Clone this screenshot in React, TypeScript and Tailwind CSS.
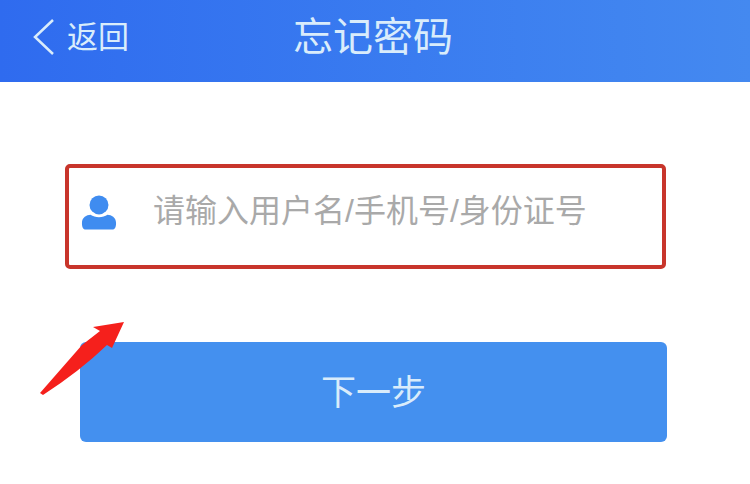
const cjk = "font-['Liberation_Sans','Noto_Sans_CJK_SC',sans-serif]";

function UserIcon() {
  return (
    <svg width="36" height="37" viewBox="0 0 38 38" fill="#3f8cf0">
      <circle cx="19" cy="11" r="10" />
      <path d="M1 30c0-5.500 5-8.500 9-8.500 2.500 1.500 5.500 2.500 9 2.500s6.500-1 9-2.500c4 0 9 3 9 8.500 0 5-1.500 7-4 7H5c-2.500 0-4-2-4-7z" />
    </svg>
  );
}

function Arrow() {
  return (
    <svg className="absolute left-[38px] top-[319px]" width="88" height="78" viewBox="0 0 88 78">
      <path d="M2 74 L44 26 L62 12 L55 8 L86 3 L74 29 L69 26 Q42 52 5 76 Z" fill="#f5201c" />
    </svg>
  );
}

export default function App() {
  return (
    <div className={`relative w-[750px] h-[484px] overflow-hidden bg-white ${cjk}`}>
      <header className="flex items-center h-[82px] pb-[8px] bg-gradient-to-r from-[#2f6bef] to-[#4489f0] text-[#d9ecfb]">
        <div className="flex items-center pl-[32px] w-[293px]">
          <svg width="24" height="38" viewBox="0 0 24 38" fill="none" stroke="#d9ecfb" strokeWidth="2.500">
            <path d="M21 2 L3 19 L21 36" />
          </svg>
          <span className="ml-[11px] text-[31px] leading-none">返回</span>
        </div>
        <h1 className="text-[40px] leading-none font-normal">忘记密码</h1>
      </header>

      <main>
        <div className="ml-[65px] mt-[82px] flex items-center w-[601px] h-[105px] border-[4px] border-[#c8352b] rounded-[5px] pl-[12px] pb-[8px]">
          <UserIcon />
          <span className="ml-[36px] mb-[4px] text-[32px] leading-none text-[#a9a9a9]">请输入用户名/手机号/身份证号</span>
        </div>
        <button className="block ml-[80px] mt-[73px] w-[587px] h-[100px] rounded-[6px] bg-[#4490ef] text-[35px] leading-none text-[#d9ecfb]">
          下一步
        </button>
      </main>

      <Arrow />
    </div>
  );
}
